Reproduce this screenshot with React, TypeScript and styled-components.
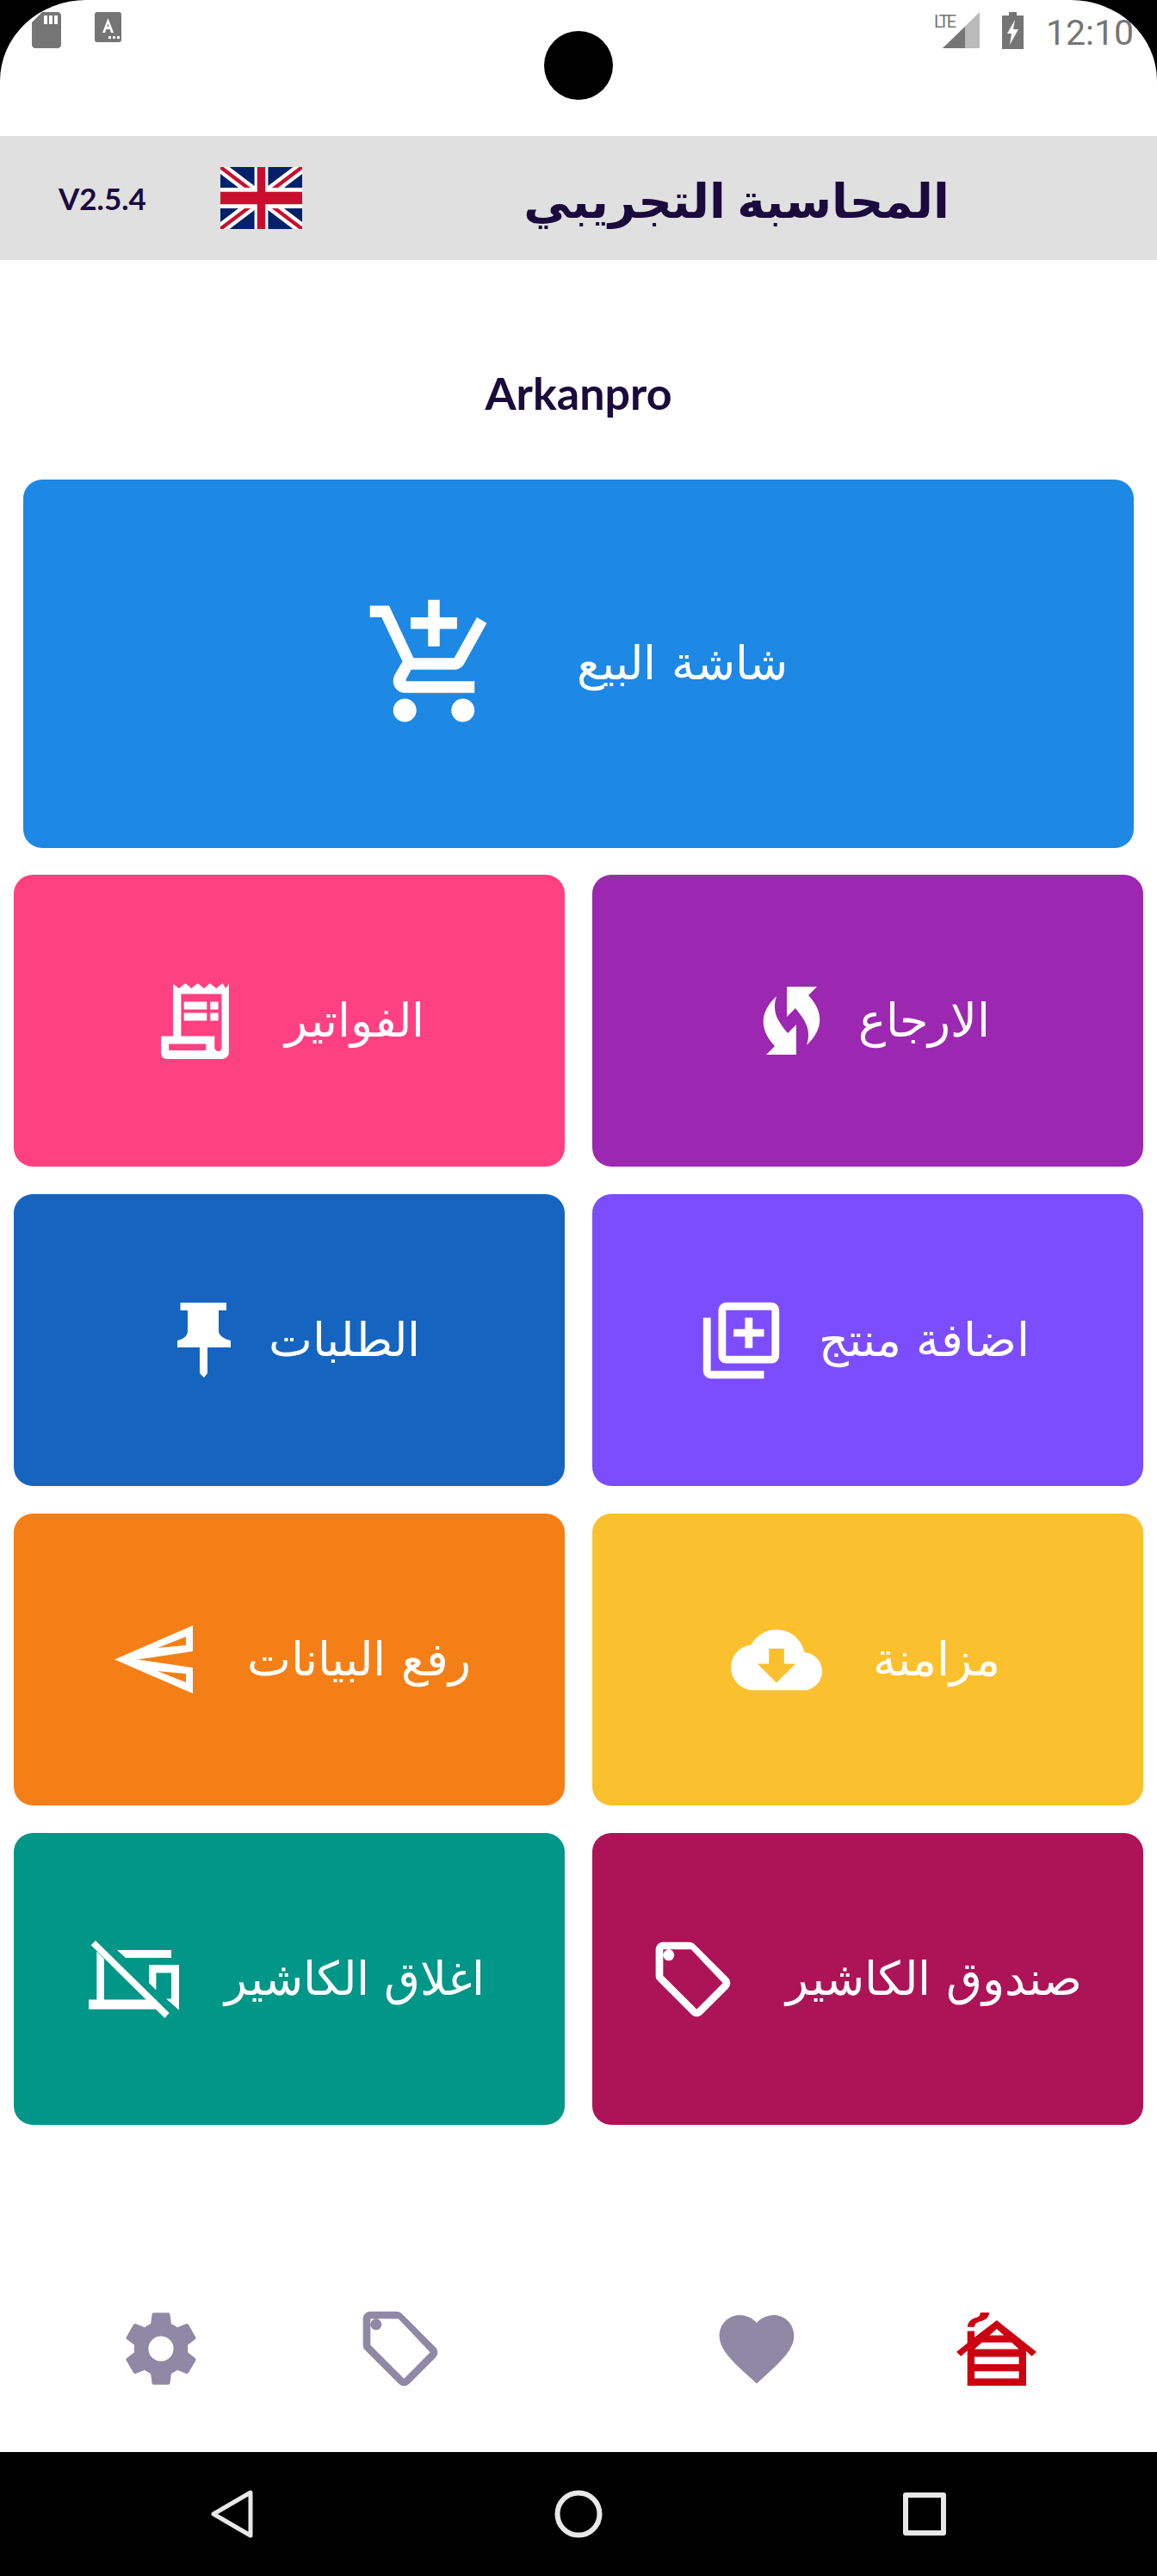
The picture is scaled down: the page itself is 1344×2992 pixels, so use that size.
import React from 'react'
import styled, { createGlobalStyle } from 'styled-components'

const GlobalStyle = createGlobalStyle`
  html, body { margin: 0; padding: 0; background: #000; }
  body { font-family: "Lato", "DejaVu Sans", sans-serif; }
  * { box-sizing: border-box; }
`

const Page = styled.div`
  position: relative;
  width: 1344px;
  height: 2992px;
  display: flex;
  flex-direction: column;
  background: #fff;
  border-radius: 100px 100px 0 0 / 94px 94px 0 0;
  overflow: hidden;
`

const StatusBar = styled.div`
  height: 158px;
  padding: 14px 27px 0 37px;
  display: flex;
  justify-content: space-between;
  align-items: flex-start;
  color: #757575;
`

const StatusGroup = styled.div<{ $gap: number }>`
  display: flex;
  align-items: flex-start;
  gap: ${p => p.$gap}px;
`

const Clock = styled.span`
  font-family: "Roboto", sans-serif;
  font-size: 41px;
  line-height: 48px;
  color: #757575;
`

const Camera = styled.div`
  position: absolute;
  left: 632px;
  top: 36px;
  width: 80px;
  height: 80px;
  border-radius: 50%;
  background: #000;
`

const Header = styled.header`
  height: 144px;
  padding: 0 0 0 68px;
  display: flex;
  align-items: center;
  background: #e0e0e0;
`

const Version = styled.span`
  width: 102px;
  font-size: 35px;
  font-weight: 700;
  color: #1b0a3c;
`

const Flag = styled.svg`
  margin-left: 86px;
  flex: none;
`

const AppTitle = styled.h1`
  flex: 1;
  margin: 0;
  padding: 4px 0 0 16px;
  text-align: center;
  font-size: 55px;
  line-height: 80px;
  font-weight: 700;
  color: #1b0a3c;
`

const Company = styled.div`
  height: 255px;
  padding-top: 124px;
  text-align: center;
  font-size: 52px;
  line-height: 60px;
  font-weight: 700;
  color: #1b0a3c;
`

const Tile = styled.div<{ $bg: string; $gap: number; $nudge?: number }>`
  display: flex;
  align-items: center;
  justify-content: center;
  gap: ${p => p.$gap}px;
  padding-left: ${p => Math.max(p.$nudge ?? 0, 0) * 2}px;
  padding-right: ${p => Math.max(-(p.$nudge ?? 0), 0) * 2}px;
  border-radius: 22px;
  background: ${p => p.$bg};
  color: #fff;
`

const HeroTile = styled(Tile)`
  height: 428px;
  margin: 0 27px 31px;
`

const TileGrid = styled.div`
  display: grid;
  grid-template-columns: 640px 640px;
  grid-auto-rows: 339px;
  gap: 32px;
  padding: 0 16px;
`

const Label = styled.span`
  font-family: "DejaVu Sans", sans-serif;
  font-weight: 200;
  font-size: 54px;
  line-height: 80px;
  white-space: nowrap;
`

const BottomBar = styled.nav`
  flex: 1;
  padding: 156px 48px 16px;
  display: grid;
  grid-template-columns: 278px 278px 136px 278px 278px;
  align-items: center;
  justify-items: center;
`

const NavSpacer = styled.div``

const SystemNav = styled.div`
  height: 144px;
  display: grid;
  grid-template-columns: repeat(3, 402px);
  justify-content: center;
  align-items: center;
  justify-items: center;
  background: #000;
`

const IconSvg = styled.svg<{ $color?: string }>`
  display: block;
  flex: none;
  fill: ${p => p.$color ?? 'currentColor'};
`

const NavGlyph = styled.svg`
  fill: none;
  stroke: #e8e8e8;
  stroke-linejoin: round;
`

const MDI = {
  cartPlus: 'M11 9H13V6H16V4H13V1H11V4H8V6H11M7 18C5.9 18 5 18.9 5 20S5.9 22 7 22 9 21.1 9 20 8.1 18 7 18M17 18C15.9 18 15 18.9 15 20S15.9 22 17 22 19 21.1 19 20 18.1 18 17 18M7.2 14.8V14.7L8.1 13H15.5C16.2 13 16.9 12.6 17.2 12L21.1 5L19.4 4L15.5 11H8.5L4.3 2H1V4H3L6.6 11.6L5.2 14C5.1 14.3 5 14.6 5 15C5 16.1 5.9 17 7 17H19V15H7.4C7.3 15 7.2 14.9 7.2 14.8Z',
  plusBoxes: 'M4,6H2V20A2,2 0 0,0 4,22H18V20H4V6M20,2H8A2,2 0 0,0 6,4V16A2,2 0 0,0 8,18H20A2,2 0 0,0 22,16V4A2,2 0 0,0 20,2M20,16H8V4H20V16M13,14H15V11H18V9H15V6H13V9H10V11H13V14Z',
  cloud: 'M17,13L12,18L7,13H10V9H14V13M19.35,10.03C18.67,6.59 15.64,4 12,4C9.11,4 6.6,5.64 5.35,8.03C2.34,8.36 0,10.9 0,14A6,6 0 0,0 6,20H19A5,5 0 0,0 24,15C24,12.36 21.95,10.22 19.35,10.03Z',
  tag: 'M5.5,7A1.5,1.5 0 0,0 7,5.5A1.5,1.5 0 0,0 5.5,4A1.5,1.5 0 0,0 4,5.5A1.5,1.5 0 0,0 5.5,7M21.41,11.58C21.77,11.94 22,12.44 22,13C22,13.55 21.78,14.05 21.41,14.41L14.41,21.41C14.05,21.77 13.55,22 13,22C12.45,22 11.95,21.77 11.59,21.41L2.59,12.41C2.22,12.05 2,11.55 2,11V4C2,2.89 2.89,2 4,2H11C11.55,2 12.05,2.22 12.41,2.59L21.41,11.58M13,20L20,13L11.5,4H4V11L13,20Z',
  cog: 'M12,15.5A3.5,3.5 0 0,1 8.5,12A3.5,3.5 0 0,1 12,8.5A3.5,3.5 0 0,1 15.5,12A3.5,3.5 0 0,1 12,15.5M19.43,12.97C19.47,12.65 19.5,12.33 19.5,12C19.5,11.67 19.47,11.34 19.43,11L21.54,9.37C21.73,9.22 21.78,8.95 21.66,8.73L19.66,5.27C19.54,5.05 19.27,4.96 19.05,5.05L16.56,6.05C16.04,5.66 15.5,5.32 14.87,5.07L14.5,2.42C14.46,2.18 14.25,2 14,2H10C9.75,2 9.54,2.18 9.5,2.42L9.13,5.07C8.5,5.32 7.96,5.66 7.44,6.05L4.95,5.05C4.73,4.96 4.46,5.05 4.34,5.27L2.34,8.73C2.21,8.95 2.27,9.22 2.46,9.37L4.57,11C4.53,11.34 4.5,11.67 4.5,12C4.5,12.33 4.53,12.65 4.57,12.97L2.46,14.63C2.27,14.78 2.21,15.05 2.34,15.27L4.34,18.73C4.46,18.95 4.73,19.03 4.95,18.95L7.44,17.94C7.96,18.34 8.5,18.68 9.13,18.93L9.5,21.58C9.54,21.82 9.75,22 10,22H14C14.25,22 14.46,21.82 14.5,21.58L14.87,18.93C15.5,18.67 16.04,18.34 16.56,17.94L19.05,18.95C19.27,19.03 19.54,18.95 19.66,18.73L21.66,15.27C21.78,15.05 21.73,14.78 21.54,14.63L19.43,12.97Z',
  heart: 'M12,21.35L10.55,20.03C5.4,15.36 2,12.27 2,8.5C2,5.41 4.42,3 7.5,3C9.24,3 10.91,3.81 12,5.08C13.09,3.81 14.76,3 16.5,3C19.58,3 22,5.41 22,8.5C22,12.27 18.6,15.36 13.45,20.03L12,21.35Z',
}

const Mdi = ({ d, size, color }: { d: string; size: number; color?: string }) => (
  <IconSvg viewBox="0 0 24 24" width={size} height={size} $color={color}>
    <path d={d} />
  </IconSvg>
)

const ReceiptIcon = () => (
  <IconSvg viewBox="35 20 237 265" width={79} height={88}>
    <path fillRule="evenodd" d="M77 22L98 38L120 20L141 38L163 20L185 38L206 20L228 38L250 20L261 38L272 22V262C272 276 260 285 248 285H55C43 285 35 276 35 265V205H77ZM105 58V205H222V245C222 252 228 258 235 258C242 258 247 252 247 245V58ZM62 232V255H192V232ZM115 85V112H195V85ZM207 85V112H235V85ZM115 124V151H195V124ZM207 124V151H235V124Z" />
  </IconSvg>
)

const SyncIcon = () => (
  <IconSvg viewBox="0 0 67 79" width={67} height={79}>
    <path d="M16 11C-4 30 -4 50 14 69L4 79H39V44L29 54C18 40 10 30 16 11Z" />
    <path d="M51 68C71 49 71 29 53 10L63 0H28V35L38 25C49 39 57 49 51 68Z" />
  </IconSvg>
)

const PinIcon = () => (
  <IconSvg viewBox="0 0 62 87" width={62} height={87}>
    <path d="M3.5 0H57V9H48V33C48 38 54 42 62 44V52H35V82L31 87L26 82V52H0V44C8 42 12 38 12 33V9H3.5Z" />
  </IconSvg>
)

const SendIcon = () => (
  <IconSvg viewBox="0 0 91 79" width={91} height={79}>
    <path fillRule="evenodd" d="M0 39.5L91 0V30L27 39.5L91 49V79ZM83 13L50 26L83 23ZM83 66L50 53L83 56Z" />
  </IconSvg>
)

const RegisterOffIcon = () => (
  <IconSvg viewBox="34 32 316 271" width={105} height={90}>
    <path d="M42 48L58 32L316 285L300 303Z" />
    <path d="M62 70L88 96V238H240L270 238V272H34V238H62Z" />
    <path d="M133 65H323V92H163Z" />
    <path d="M245 117H350V275L305 235H323V145H270V205L245 180Z" />
  </IconSvg>
)

const GarageIcon = () => (
  <IconSvg viewBox="30 18 278 254" width={93} height={85} $color="#cc0011">
    <path fillRule="evenodd" d="M170 45L308 155L292 170L272 152V272H68V150L46 170L30 155L68 124V82H93V104ZM170 75L145 97H195ZM118 122L93 145H247L222 122ZM93 172V197H247V172ZM93 222V247H247V222Z" />
    <path d="M68 68C70 48 85 38 100 35C110 32 112 28 113 18H144C144 34 130 45 115 48C100 52 93 58 93 68Z" />
  </IconSvg>
)

const SdIcon = () => (
  <IconSvg viewBox="0 0 34 42" width={34} height={42}>
    <path fillRule="evenodd" d="M12 0H30C32 0 34 2 34 4V38C34 40 32 42 30 42H4C2 42 0 40 0 38V12ZM14 4V14H18V4ZM20 4V14H24V4ZM26 4V14H30V4Z" />
  </IconSvg>
)

const KeyboardIcon = () => (
  <IconSvg viewBox="0 0 31 35" width={31} height={35}>
    <path fillRule="evenodd" d="M3 0H28C30 0 31 1 31 3V32C31 34 30 35 28 35H3C1 35 0 34 0 32V3C0 1 1 0 3 0ZM15.5 7L9 24H12L13.5 20H17.5L19 24H22ZM14.5 17L15.5 13L16.5 17ZM16 28V31H19V28ZM21 28V31H24V28ZM26 28V31H29V28Z" />
  </IconSvg>
)

const SignalIcon = () => (
  <svg viewBox="0 0 53 42" width={53} height={42} fill="currentColor">
    <path d="M53 0V42H10Z" opacity="0.5" />
    <path d="M36 17V42H10Z" />
    <text x="0" y="18" fontFamily="Roboto, sans-serif" fontSize="20" textLength="26">LTE</text>
  </svg>
)

const BatteryIcon = () => (
  <IconSvg viewBox="0 0 25 43" width={25} height={43}>
    <path fillRule="evenodd" d="M8 0H17V4H25V43H0V4H8ZM15 9L6 25H11L9 38L19 20H13Z" />
  </IconSvg>
)

const UnionJack = () => (
  <Flag viewBox="0 0 60 30" width={95} height={72} preserveAspectRatio="none">
    <rect width="60" height="30" fill="#012169" />
    <path d="M0 0L60 30M60 0L0 30" stroke="#fff" strokeWidth="6" />
    <path d="M0 0L60 30M60 0L0 30" stroke="#c8102e" strokeWidth="2" />
    <path d="M30 0V30M0 15H60" stroke="#fff" strokeWidth="10" />
    <path d="M30 0V30M0 15H60" stroke="#c8102e" strokeWidth="6" />
  </Flag>
)

const tiles = [
  { bg: '#ff4081', label: 'الفواتير', icon: <ReceiptIcon />, gap: 65, nudge: 4 },
  { bg: '#9c27b0', label: 'الارجاع', icon: <SyncIcon />, gap: 44, nudge: 10 },
  { bg: '#1565c0', label: 'الطلبات', icon: <PinIcon />, gap: 44, nudge: 11 },
  { bg: '#7c4dff', label: 'اضافة منتج', icon: <Mdi d={MDI.plusBoxes} size={106} />, gap: 37, nudge: -6 },
  { bg: '#f57f17', label: 'رفع البيانات', icon: <SendIcon />, gap: 63, nudge: 4 },
  { bg: '#fbc02d', label: 'مزامنة', icon: <Mdi d={MDI.cloud} size={106} />, gap: 59, nudge: -3 },
  { bg: '#009688', label: 'اغلاق الكاشير', icon: <RegisterOffIcon />, gap: 53, nudge: -3 },
  { bg: '#ad1457', label: 'صندوق الكاشير', icon: <Mdi d={MDI.tag} size={104} />, gap: 56, nudge: -3 },
]

export default function App() {
  return (
    <Page>
      <GlobalStyle />
      <StatusBar>
        <StatusGroup $gap={39}>
          <SdIcon />
          <KeyboardIcon />
        </StatusGroup>
        <StatusGroup $gap={26}>
          <SignalIcon />
          <BatteryIcon />
          <Clock>12:10</Clock>
        </StatusGroup>
      </StatusBar>
      <Camera />
      <Header>
        <Version>V2.5.4</Version>
        <UnionJack />
        <AppTitle>المحاسبة التجريبي</AppTitle>
      </Header>
      <Company>Arkanpro</Company>
      <HeroTile $bg="#1e88e5" $gap={85} $nudge={-3}>
        <Mdi d={MDI.cartPlus} size={162} />
        <Label>شاشة البيع</Label>
      </HeroTile>
      <TileGrid>
        {tiles.map(t => (
          <Tile key={t.label} $bg={t.bg} $gap={t.gap} $nudge={t.nudge}>
            {t.icon}
            <Label>{t.label}</Label>
          </Tile>
        ))}
      </TileGrid>
      <BottomBar>
        <Mdi d={MDI.cog} size={100} color="#9089a5" />
        <Mdi d={MDI.tag} size={104} color="#9089a5" />
        <NavSpacer />
        <Mdi d={MDI.heart} size={104} color="#9089a5" />
        <GarageIcon />
      </BottomBar>
      <SystemNav>
        <NavGlyph width="50" height="56" viewBox="0 0 50 56" strokeWidth="5">
          <path d="M46 3V53L3 28Z" />
        </NavGlyph>
        <NavGlyph width="56" height="56" viewBox="0 0 56 56" strokeWidth="6">
          <circle cx="28" cy="28" r="24.5" />
        </NavGlyph>
        <NavGlyph width="50" height="50" viewBox="0 0 50 50" strokeWidth="6">
          <rect x="3" y="3" width="44" height="44" />
        </NavGlyph>
      </SystemNav>
    </Page>
  )
}
